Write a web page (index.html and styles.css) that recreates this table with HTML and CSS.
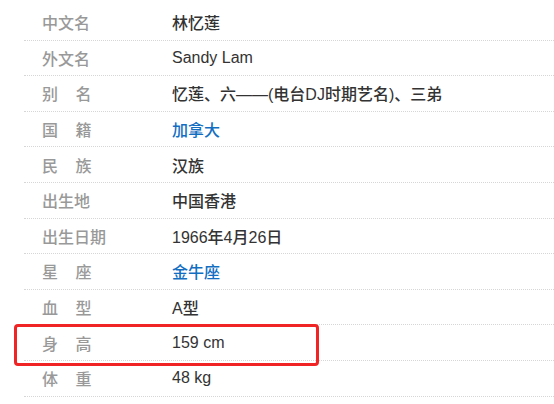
FILE: index.html
```html
<!DOCTYPE html>
<html lang="zh">
<head>
  <meta charset="UTF-8">
  <title>林忆莲</title>
  <link rel="stylesheet" href="styles.css">
</head>
<body>
  <div class="fiche">
    <div class="ligne"><span class="nom">中文名</span><span class="valeur">林忆莲</span></div>
    <div class="ligne"><span class="nom">外文名</span><span class="valeur">Sandy Lam</span></div>
    <div class="ligne"><span class="nom deux">别名</span><span class="valeur">忆莲、六——(电台DJ时期艺名)、三弟</span></div>
    <div class="ligne"><span class="nom deux">国籍</span><span class="valeur"><a href="#">加拿大</a></span></div>
    <div class="ligne"><span class="nom deux">民族</span><span class="valeur">汉族</span></div>
    <div class="ligne"><span class="nom">出生地</span><span class="valeur">中国香港</span></div>
    <div class="ligne"><span class="nom">出生日期</span><span class="valeur">1966年4月26日</span></div>
    <div class="ligne"><span class="nom deux">星座</span><span class="valeur"><a href="#">金牛座</a></span></div>
    <div class="ligne"><span class="nom deux">血型</span><span class="valeur">A型</span></div>
    <div class="ligne marque"><span class="nom deux">身高</span><span class="valeur">159 cm</span></div>
    <div class="ligne"><span class="nom deux">体重</span><span class="valeur">48 kg</span></div>
  </div>
</body>
</html>
```

FILE: styles.css
```css
body {
  margin: 0;
  background: #fff;
  font-family: "Liberation Sans", "Noto Sans CJK SC", sans-serif;
  font-size: 16px;
}
.fiche {
  padding: 5px 0 0 24px;
}
.ligne {
  position: relative;
  display: flex;
  align-items: center;
  height: 35.6px;
  box-sizing: border-box;
  padding-left: 18px;
  border-bottom: 1px dotted #d6d6d6;
}
.nom {
  width: 130px;
  color: #999;
  font-weight: 500;
  white-space: nowrap;
}
.nom.deux {
  letter-spacing: 1.1em;
}
.valeur {
  color: #333;
  font-weight: 500;
}
.valeur a {
  color: #136ec2;
  text-decoration: none;
}
.marque::after {
  content: "";
  position: absolute;
  left: -10px;
  top: -1px;
  width: 305px;
  height: 42px;
  box-sizing: border-box;
  border: 3px solid #f02424;
  border-radius: 4px;
}
```
